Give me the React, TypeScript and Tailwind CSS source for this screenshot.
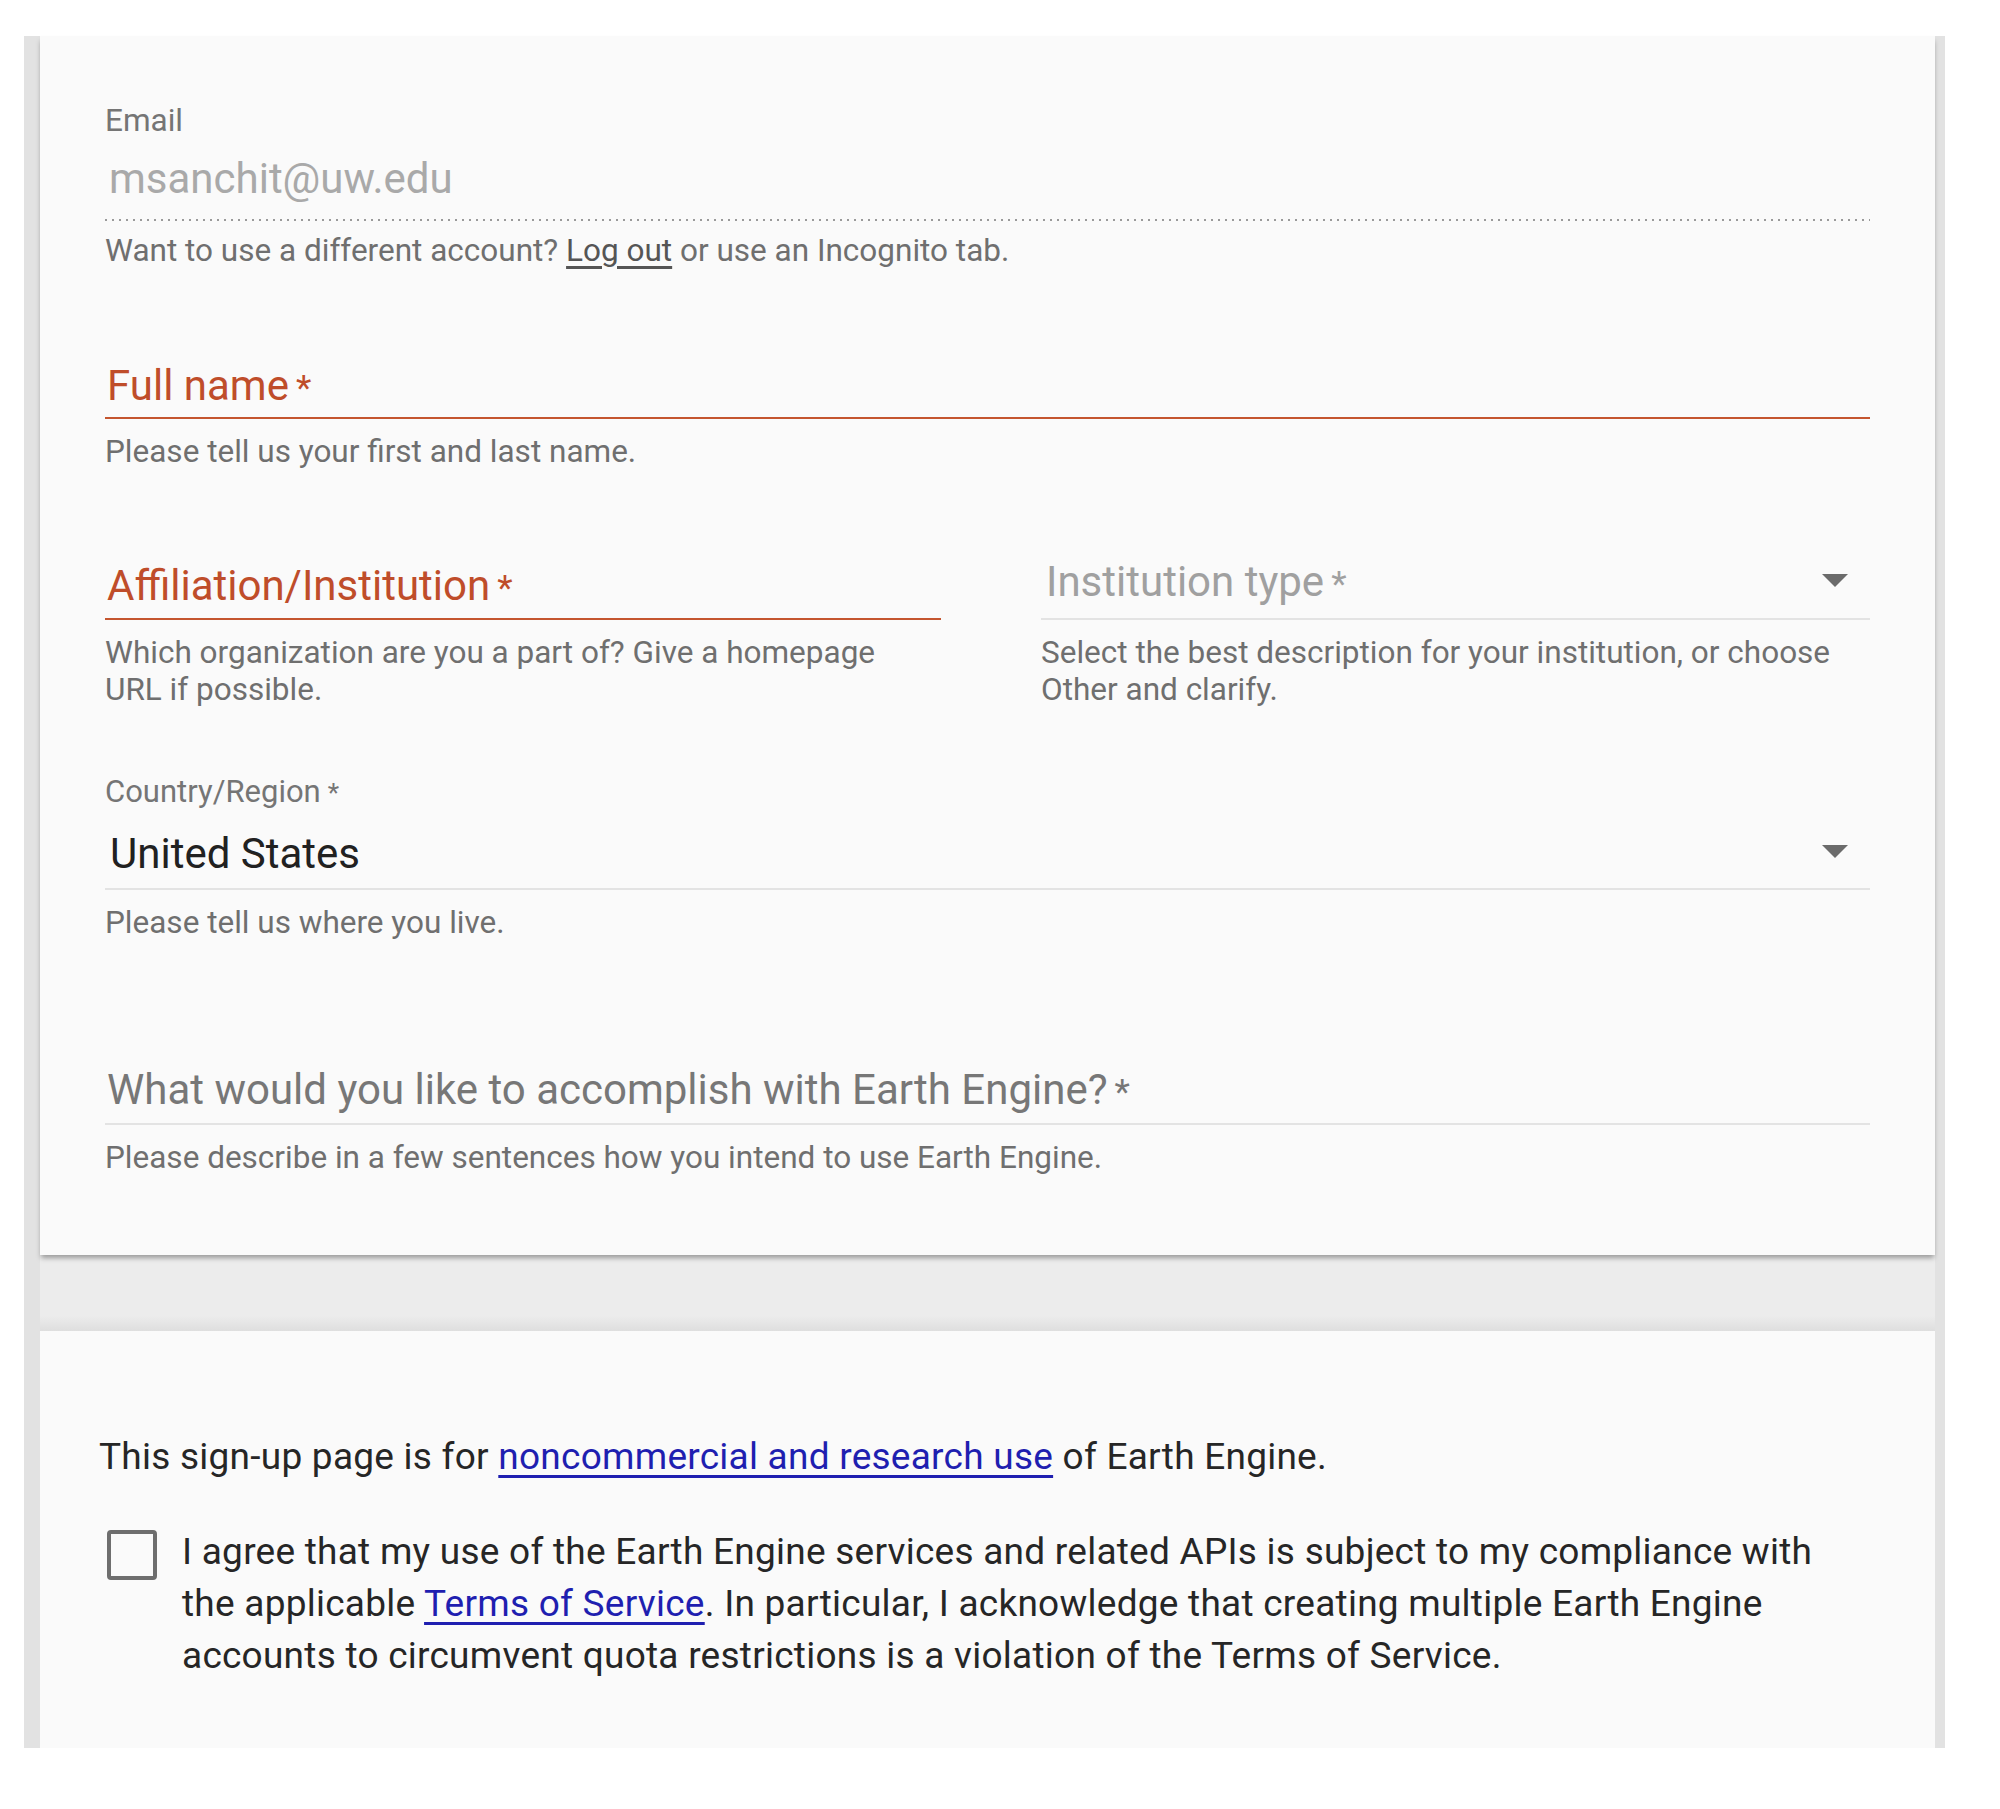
import React from 'react';

const Arrow = () => (
  <svg width="26" height="13" viewBox="7 10 10 5" className="shrink-0">
    <path d="M7 10l5 5 5-5z" fill="#6b6b6b" />
  </svg>
);

const Req = () => <span className="ml-[7px] text-[0.85em] leading-none">*</span>;

export default function App() {
  return (
    <div className="min-h-[1809px] bg-white font-['Roboto','Liberation_Sans',sans-serif]">
      <div className="ml-[24px] mt-[36px] w-[1921px] bg-[#e2e2e2] pl-[16px] pr-[10px]">
        {/* account details card */}
        <div className="relative z-10 bg-[#fafafa] px-[65px] pt-[67px] pb-[79px] shadow-[0_4px_5px_-1px_rgba(0,0,0,0.35)]">
          <div className="text-[31.5px] leading-[36px] text-[#757575]">Email</div>
          <div className="mt-[15px] pl-[4px] text-[42px] leading-[50px] text-[#a9a9a9]">
            msanchit@uw.edu
          </div>
          <div className="mt-[15px] h-[2px] bg-[linear-gradient(to_right,#9a9a9a_2px,transparent_2px)] bg-size-[7px_2px]" />
          <div className="mt-[12px] text-[31.5px] leading-[36px] text-[#6f6f6f]">
            Want to use a different account?{' '}
            <span className="text-[#555] underline underline-offset-[5px]">Log out</span> or use an
            Incognito tab.
          </div>

          <div className="mt-[92px] h-[50px] pl-[2px] text-[42px] leading-[50px] text-[#bf4d2a]">
            Full name<Req />
          </div>
          <div className="mt-[6px] h-[2px] bg-[#c4552f]" />
          <div className="mt-[15px] text-[31.5px] leading-[36px] text-[#6f6f6f]">
            Please tell us your first and last name.
          </div>

          <div className="mt-[91px] grid grid-cols-[836px_1fr] gap-x-[100px]">
            <div>
              <div className="h-[57px] pl-[2px] text-[42px] leading-[50px] text-[#bf4d2a]">
                Affiliation/Institution<Req />
              </div>
              <div className="h-[2px] bg-[#c4552f]" />
              <div className="mt-[14px] text-[31.5px] leading-[37px] text-[#6f6f6f]">
                Which organization are you a part of? Give a homepage
                <br />
                URL if possible.
              </div>
            </div>
            <div>
              <div className="flex h-[57px] items-start justify-between pl-[5px] pr-[22px]">
                <span className="text-[42px] leading-[42px] text-[#a0a0a0]">
                  Institution type<Req />
                </span>
                <span className="mt-[13px]">
                  <Arrow />
                </span>
              </div>
              <div className="h-[2px] bg-[#e3e3e3]" />
              <div className="mt-[14px] text-[31.5px] leading-[37px] text-[#6f6f6f]">
                Select the best description for your institution, or choose
                <br />
                Other and clarify.
              </div>
            </div>
          </div>

          <div className="mt-[66px] h-[36px] text-[31px] leading-[36px] text-[#757575]">
            Country/Region<Req />
          </div>
          <div className="mt-[19px] flex h-[50px] items-start justify-between pl-[5px] pr-[22px]">
            <span className="text-[42px] leading-[50px] text-[#212121]">United States</span>
            <span className="mt-[16px]">
              <Arrow />
            </span>
          </div>
          <div className="mt-[9px] h-[2px] bg-[#e3e3e3]" />
          <div className="mt-[15px] text-[31.5px] leading-[36px] text-[#6f6f6f]">
            Please tell us where you live.
          </div>

          <div className="mt-[124px] h-[50px] pl-[2px] text-[42px] leading-[50px] text-[#777]">
            What would you like to accomplish with Earth Engine?<Req />
          </div>
          <div className="mt-[8px] h-[2px] bg-[#e3e3e3]" />
          <div className="mt-[15px] text-[31.5px] leading-[36px] text-[#6f6f6f]">
            Please describe in a few sentences how you intend to use Earth Engine.
          </div>
        </div>

        <div className="h-[76px] bg-[linear-gradient(to_bottom,#ececec_80%,#dedede)]" />

        {/* terms card */}
        <div className="bg-[#fafafa] pl-[59px] pr-[40px] pt-[100px] pb-[66px]">
          <p className="text-[37px] leading-[52px] tracking-[0.25px] text-[#262626]">
            This sign-up page is for{' '}
            <a className="text-[#1f1fb0] underline underline-offset-[6px]">
              noncommercial and research use
            </a>{' '}
            of Earth Engine.
          </p>
          <div className="mt-[43px] flex gap-[25px] pl-[8px]">
            <div className="mt-[4px] h-[50px] w-[50px] shrink-0 rounded-[4px] border-[4px] border-[#6e6e6e]" />
            <p className="whitespace-nowrap text-[37px] leading-[52px] tracking-[0.25px] text-[#262626]">
              I agree that my use of the Earth Engine services and related APIs is subject to my compliance with
              <br />
              the applicable{' '}
              <a className="text-[#1f1fb0] underline underline-offset-[6px]">Terms of Service</a>. In
              particular, I acknowledge that creating multiple Earth Engine
              <br />
              accounts to circumvent quota restrictions is a violation of the Terms of Service.
            </p>
          </div>
        </div>
      </div>
    </div>
  );
}
